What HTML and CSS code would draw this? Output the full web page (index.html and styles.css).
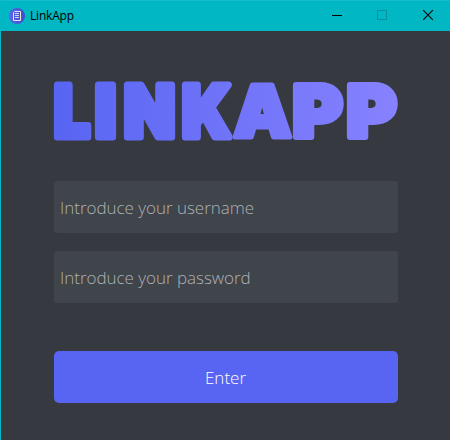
FILE: index.html
```html
<!DOCTYPE html>
<html lang="en">
<head>
<meta charset="utf-8">
<title>LinkApp</title>
<link rel="stylesheet" href="styles.css">
</head>
<body>
<div class="window">
  <header class="titlebar">
    <svg class="app-icon" width="16" height="16" viewBox="0 0 16 16">
      <defs><linearGradient id="badge"><stop stop-color="#5865f2"/><stop offset="1" stop-color="#3d50c2"/></linearGradient></defs>
      <circle cx="8" cy="8" r="8" fill="url(#badge)"/>
      <path d="M5.500 3.500h6v9h-7V4.500z" fill="none" stroke="#e6e2f2"/>
      <path d="M6 5.500h4M6 7.500h4M6 9.500h4" stroke="#d6d3ed"/>
    </svg>
    <span class="title">LinkApp</span>
    <div class="controls">
      <svg width="46" height="30" viewBox="0 0 46 30"><path d="M18 14.500h10" stroke="#000"/></svg>
      <svg width="46" height="30" viewBox="0 0 46 30"><path d="M17.500 9.500h9v9h-9z" fill="none" stroke="#078f9b"/></svg>
      <svg width="46" height="30" viewBox="0 0 46 30"><path d="M17.200 9.200l9.600 9.600M26.800 9.200l-9.600 9.600" stroke="#000" stroke-width="1.100"/></svg>
    </div>
  </header>
  <form class="login">
    <svg class="wordmark" width="344" height="59" viewBox="0 0 344 59">
      <defs><linearGradient id="brand" gradientUnits="userSpaceOnUse" x1="0" y1="0" x2="344" y2="0"><stop stop-color="#5865f2"/><stop offset="1" stop-color="#8782ff"/></linearGradient></defs>
      <text y="55.5"><tspan class="bold" x="0" textLength="36" lengthAdjust="spacingAndGlyphs">L</tspan><tspan class="bold" x="41">I</tspan><tspan class="bold" x="70" textLength="51" lengthAdjust="spacingAndGlyphs">N</tspan><tspan class="bold" x="128" textLength="49" lengthAdjust="spacingAndGlyphs">K</tspan><tspan class="open" x="179.500" textLength="58" lengthAdjust="spacingAndGlyphs">A</tspan><tspan x="238.500" textLength="50" lengthAdjust="spacingAndGlyphs">P</tspan><tspan x="292.500" textLength="50" lengthAdjust="spacingAndGlyphs">P</tspan></text>
    </svg>
    <input class="field" type="text" placeholder="Introduce your username">
    <input class="field" type="password" placeholder="Introduce your password">
    <button class="submit" type="button">Enter</button>
  </form>
</div>
</body>
</html>
```
FILE: styles.css
```css
* { box-sizing: border-box; }
body { margin: 0; }
.window {
  height: 440px;
  overflow: hidden;
  border-left: 1px solid #00b7c3;
  background: #36393f;
  font-family: "Open Sans", sans-serif;
}
.titlebar {
  display: flex;
  align-items: center;
  height: 31px;
  padding-left: 8px;
  background: #00b7c3;
  border-top: 1px solid #16bbc7;
}
.app-icon { flex: none; }
.title { margin: -1px 0 0 5px; font-size: 12px; color: #000; letter-spacing: -.2px; }
.controls { display: flex; margin: 0 -2px 0 auto; }
.controls svg { display: block; }
.login { display: flex; flex-direction: column; padding: 50px 52px 0 53px; }
.wordmark { display: block; margin-bottom: 41px; overflow: visible; }
.wordmark text {
  font-family: Inter, sans-serif;
  font-weight: 900;
  font-size: 72px;
  fill: url(#brand);
  stroke: url(#brand);
  stroke-width: 6px;
  stroke-linejoin: round;
}
.wordmark .bold { stroke-width: 7px; }
.wordmark .open { stroke-width: 5px; }
.field {
  height: 52px;
  margin: 0 0 18px;
  padding: 0 7px 0 6px;
  border: 0;
  border-radius: 3px;
  outline: 0;
  background: #40444b;
  color: #dcddde;
  font: 300 17px "Open Sans", sans-serif;
  letter-spacing: -.03px;
}
.field::placeholder { color: #aeb1b5; opacity: 1; }
.submit {
  height: 52px;
  margin-top: 30px;
  padding: 0 1px 0 0;
  border: 0;
  border-radius: 5px;
  background: #5865f2;
  color: #fff;
  font: 300 17px "Open Sans", sans-serif;
}
```
